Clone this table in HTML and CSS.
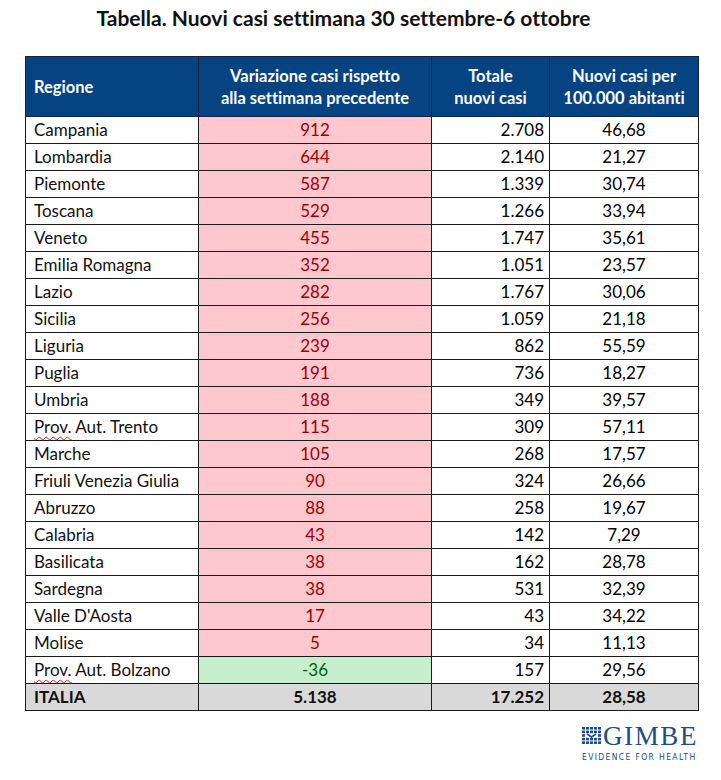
FILE: index.html
```html
<!DOCTYPE html>
<html lang="it">
<head>
<meta charset="utf-8">
<title>Tabella GIMBE</title>
<link rel="stylesheet" href="styles.css">
</head>
<body>
<div class="page">
  <h1 class="title">Tabella. Nuovi casi settimana 30 settembre-6 ottobre</h1>
  <table class="data">
    <colgroup>
      <col class="c1"><col class="c2"><col class="c3"><col class="c4">
    </colgroup>
    <thead>
      <tr>
        <th class="left">Regione</th>
        <th>Variazione casi rispetto<br>alla settimana precedente</th>
        <th>Totale<br>nuovi casi</th>
        <th>Nuovi casi per<br>100.000 abitanti</th>
      </tr>
    </thead>
    <tbody>
      <tr><td class="reg">Campania</td><td class="var up">912</td><td class="tot">2.708</td><td class="rate">46,68</td></tr>
      <tr><td class="reg">Lombardia</td><td class="var up">644</td><td class="tot">2.140</td><td class="rate">21,27</td></tr>
      <tr><td class="reg">Piemonte</td><td class="var up">587</td><td class="tot">1.339</td><td class="rate">30,74</td></tr>
      <tr><td class="reg">Toscana</td><td class="var up">529</td><td class="tot">1.266</td><td class="rate">33,94</td></tr>
      <tr><td class="reg">Veneto</td><td class="var up">455</td><td class="tot">1.747</td><td class="rate">35,61</td></tr>
      <tr><td class="reg">Emilia Romagna</td><td class="var up">352</td><td class="tot">1.051</td><td class="rate">23,57</td></tr>
      <tr><td class="reg">Lazio</td><td class="var up">282</td><td class="tot">1.767</td><td class="rate">30,06</td></tr>
      <tr><td class="reg">Sicilia</td><td class="var up">256</td><td class="tot">1.059</td><td class="rate">21,18</td></tr>
      <tr><td class="reg">Liguria</td><td class="var up">239</td><td class="tot">862</td><td class="rate">55,59</td></tr>
      <tr><td class="reg">Puglia</td><td class="var up">191</td><td class="tot">736</td><td class="rate">18,27</td></tr>
      <tr><td class="reg">Umbria</td><td class="var up">188</td><td class="tot">349</td><td class="rate">39,57</td></tr>
      <tr><td class="reg"><span class="spell">Prov.</span> Aut. Trento</td><td class="var up">115</td><td class="tot">309</td><td class="rate">57,11</td></tr>
      <tr><td class="reg">Marche</td><td class="var up">105</td><td class="tot">268</td><td class="rate">17,57</td></tr>
      <tr><td class="reg">Friuli Venezia Giulia</td><td class="var up">90</td><td class="tot">324</td><td class="rate">26,66</td></tr>
      <tr><td class="reg">Abruzzo</td><td class="var up">88</td><td class="tot">258</td><td class="rate">19,67</td></tr>
      <tr><td class="reg">Calabria</td><td class="var up">43</td><td class="tot">142</td><td class="rate">7,29</td></tr>
      <tr><td class="reg">Basilicata</td><td class="var up">38</td><td class="tot">162</td><td class="rate">28,78</td></tr>
      <tr><td class="reg">Sardegna</td><td class="var up">38</td><td class="tot">531</td><td class="rate">32,39</td></tr>
      <tr><td class="reg">Valle D'Aosta</td><td class="var up">17</td><td class="tot">43</td><td class="rate">34,22</td></tr>
      <tr><td class="reg">Molise</td><td class="var up">5</td><td class="tot">34</td><td class="rate">11,13</td></tr>
      <tr><td class="reg"><span class="spell">Prov.</span> Aut. Bolzano</td><td class="var down">-36</td><td class="tot">157</td><td class="rate">29,56</td></tr>
      <tr class="total"><td class="reg">ITALIA</td><td class="var">5.138</td><td class="tot">17.252</td><td class="rate">28,58</td></tr>
    </tbody>
  </table>
  <div class="footer">
    <div class="logo">
      <div class="logo-top">
        <svg class="logo-icon" width="19" height="17" viewBox="0 0 19 17" aria-hidden="true">
          <g fill="#1d4d8a">
            <rect x="0" y="0" width="3" height="2.6"/><rect x="4" y="0" width="3" height="2.6"/><rect x="8" y="0" width="3" height="2.6"/><rect x="12" y="0" width="3" height="2.6"/><rect x="16" y="0" width="3" height="2.6"/>
            <rect x="0" y="3.6" width="3" height="2.6"/><rect x="4" y="3.6" width="3" height="2.6"/><rect x="8" y="3.6" width="3" height="2.6"/><rect x="12" y="3.6" width="3" height="2.6"/><rect x="16" y="3.6" width="3" height="2.6"/>
            <rect x="0" y="7.2" width="3" height="2.6"/><rect x="16" y="7.2" width="3" height="2.6"/>
            <rect x="0" y="10.8" width="3" height="2.6"/><rect x="4" y="10.8" width="3" height="2.6"/><rect x="8" y="10.8" width="3" height="2.6"/><rect x="12" y="10.8" width="3" height="2.6"/><rect x="16" y="10.8" width="3" height="2.6"/>
            <rect x="0" y="14.4" width="3" height="2.6"/><rect x="4" y="14.4" width="3" height="2.6"/><rect x="8" y="14.4" width="3" height="2.6"/><rect x="12" y="14.4" width="3" height="2.6"/><rect x="16" y="14.4" width="3" height="2.6"/>
          </g>
          <path d="M5 7 L9.5 10 L14 7" fill="none" stroke="#1d4d8a" stroke-width="1.6"/>
        </svg>
        <span class="logo-name">GIMBE</span>
      </div>
      <div class="logo-tag">EVIDENCE FOR HEALTH</div>
    </div>
  </div>
</div>
</body>
</html>
```

FILE: styles.css
```css
html, body {
  margin: 0;
  padding: 0;
  background: #ffffff;
}

.page {
  width: 721px;
  font-family: Lato, "Open Sans", "DejaVu Sans", sans-serif;
  font-variant-ligatures: none;
  color: #000;
}

.title {
  margin: 0;
  padding: 5px 34px 0 0;
  height: 56px;
  box-sizing: border-box;
  text-align: center;
  font-size: 21px;
  font-weight: bold;
  line-height: 26px;
  color: #111;
}

.data {
  margin-left: 25px;
  width: 673px;
  border-collapse: collapse;
  table-layout: fixed;
  font-size: 17px;
}

.c1 { width: 173px; }
.c2 { width: 233px; }
.c3 { width: 118px; }
.c4 { width: 149px; }

.data th {
  background: #064383;
  color: #fff;
  font-weight: bold;
  font-size: 16.5px;
  line-height: 22px;
  height: 60px;
  padding: 0 4px;
  border: 1px solid #1b2333;
  text-align: center;
  box-sizing: border-box;
}

.data th.left {
  text-align: left;
  padding-left: 8px;
}

.data td {
  height: 27px;
  padding: 0 6px;
  border: 1px solid #1a1a1a;
  box-sizing: border-box;
  line-height: 26px;
  white-space: nowrap;
}

.reg { text-align: left; padding-left: 8px !important; color: #111; }
.var { text-align: center; }
.tot { text-align: right; padding-right: 5px !important; }
.rate { text-align: center; }

.up {
  background: #ffc7ce;
  color: #9c0006;
}

.down {
  background: #c6efce;
  color: #006100;
}

.total td {
  background: #d9d9d9;
  font-weight: bold;
  color: #111;
}

.spell {
  text-decoration: underline wavy #d22;
  text-decoration-thickness: 1px;
  text-underline-offset: 3px;
}

.footer {
  margin-left: 25px;
  width: 673px;
  display: flex;
  justify-content: flex-end;
  padding-top: 15px;
}

.logo {
  display: flex;
  flex-direction: column;
  align-items: stretch;
  width: 116px;
}

.logo-top {
  display: flex;
  align-items: center;
  gap: 2px;
  height: 18px;
}

.logo-name {
  font-family: "Liberation Serif", "DejaVu Serif", serif;
  font-size: 27px;
  line-height: 18px;
  color: #1d4d8a;
  letter-spacing: 1.6px;
  padding-top: 2px;
}

.logo-tag {
  margin-top: 9px;
  font-family: "DejaVu Sans Condensed", "Liberation Sans", sans-serif;
  font-size: 8.5px;
  line-height: 8px;
  letter-spacing: 1.35px;
  color: #1d4d8a;
  white-space: nowrap;
}
```
